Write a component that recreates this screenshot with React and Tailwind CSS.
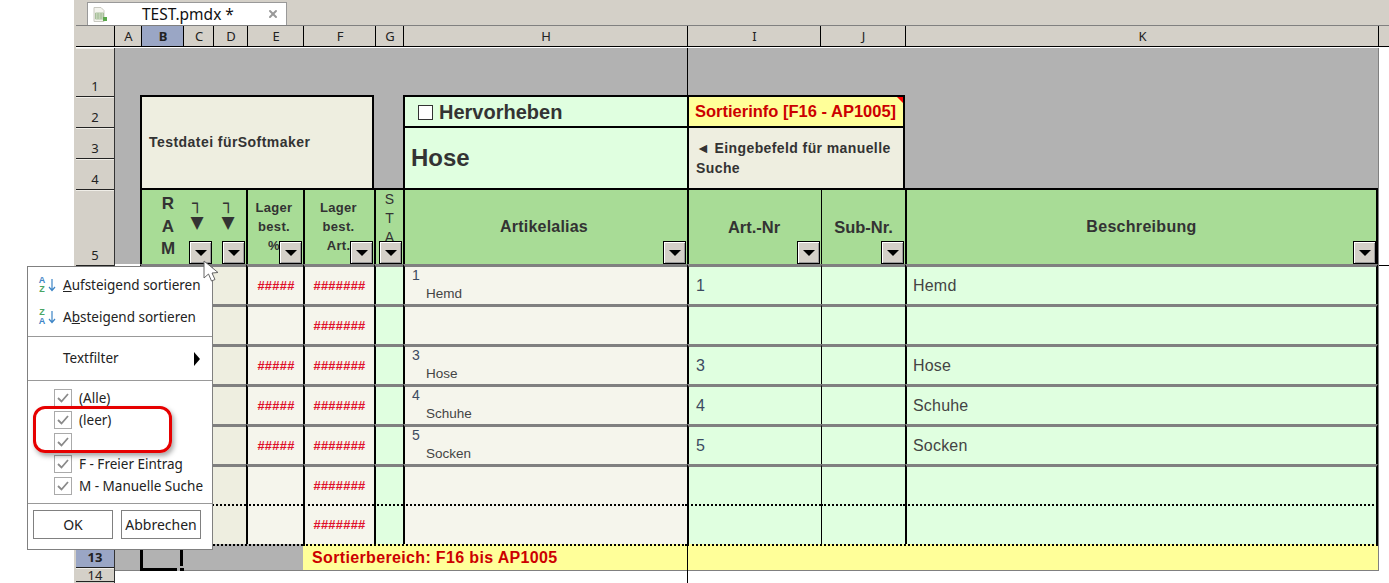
import React from "react";
import { X } from "lucide-react";

const COLS =
  "grid grid-cols-[25px_44px_30px_32px_57px_71px_29px_284px_134px_84px_473px_11px]";

const columns = [
  { label: "A", w: "w-[27px]" },
  { label: "B", w: "w-[42px]", active: true },
  { label: "C", w: "w-[30px]" },
  { label: "D", w: "w-[34px]" },
  { label: "E", w: "w-[56px]" },
  { label: "F", w: "w-[72px]" },
  { label: "G", w: "w-[28px]" },
  { label: "H", w: "w-[284px]" },
  { label: "I", w: "w-[133px]" },
  { label: "J", w: "w-[85px]" },
  { label: "K", w: "w-[473px]" },
];

const rows = [
  { id: 1, e: "#####", f: "#######", num: "1", name: "Hemd" },
  { id: 2, f: "#######" },
  { id: 3, e: "#####", f: "#######", num: "3", name: "Hose" },
  { id: 4, e: "#####", f: "#######", num: "4", name: "Schuhe" },
  { id: 5, e: "#####", f: "#######", num: "5", name: "Socken" },
  { id: 6, f: "#######" },
  { id: 7, f: "#######", dotted: true },
];

const FilterButton = ({ className }) => (
  <div
    className={`absolute bottom-0 w-[23px] h-[23px] border border-black bg-[#d4d0c8] shadow-[inset_1px_1px_0_#fff,inset_-1px_-1px_0_#999] flex items-center justify-center ${className}`}
  >
    <div className="w-0 h-0 border-x-[6px] border-t-[6px] border-x-transparent border-t-black" />
  </div>
);

const RowNumber = ({ h, label, active, className = "items-end pb-[2px]" }) => (
  <div
    className={`${h} ${className} flex justify-center overflow-hidden border-t border-b border-t-[#f0eee8] border-b-[#222] text-[13px] leading-4 text-[#222] font-['Noto_Sans',sans-serif] ${
      active ? "bg-[#9aa6c5] font-bold" : "bg-[#d4d0c8]"
    }`}
  >
    {label}
  </div>
);

const SortIcon = ({ top, bottom, topColor, bottomColor }) => (
  <div className="w-[25px] flex items-center">
    <div className="flex flex-col items-center text-[9px] leading-[9px] font-bold font-['Liberation_Sans',sans-serif] w-[10px]">
      <span className={topColor}>{top}</span>
      <span className={bottomColor}>{bottom}</span>
    </div>
    <svg width="8" height="14" viewBox="0 0 8 14" className="ml-[1px]">
      <path d="M4 1v11M1 9l3 3.5L7 9" fill="none" stroke="#3d85c6" strokeWidth="1.2" />
    </svg>
  </div>
);

const CheckItem = ({ label }) => (
  <div className="h-[22px] flex items-center pl-[26px] gap-[7px]">
    <div className="w-[18px] h-[18px] border border-[#aaa] flex items-center justify-center bg-white shrink-0">
      <svg width="14" height="12" viewBox="0 0 14 12">
        <path d="M2 6l3.5 3.5L12 2" fill="none" stroke="#8a8a8a" strokeWidth="1.8" />
      </svg>
    </div>
    <span className="text-[13.5px] leading-4 text-[#222]">{label}</span>
  </div>
);

const DataRow = ({ row }) => {
  const line = row.dotted
    ? "border-t-2 border-t-black [border-top-style:dotted]"
    : "border-t-3 border-t-[#808080]";
  return (
    <div className={`${COLS} h-[40px]`}>
      <div />
      <div className={`col-span-3 bg-[#eeeee0] border-l-2 border-l-black ${line}`} />
      <div
        className={`bg-[#f5f5ec] border-l-2 border-l-black ${line} flex items-center justify-center pl-[1px] font-bold text-[13px] tracking-[0.2px] text-[#e0102a]`}
      >
        {row.e}
      </div>
      <div
        className={`bg-[#f5f5ec] border-l-2 border-l-black ${line} flex items-center justify-center font-bold text-[13px] tracking-[0.2px] text-[#e0102a]`}
      >
        {row.f}
      </div>
      <div className={`bg-[#e0ffe0] border-l-2 border-l-black ${line}`} />
      <div className={`bg-[#f5f5ec] border-l-2 border-l-black ${line} pl-[7px] text-[#444]`}>
        {row.num && (
          <>
            <div className="text-[14px] leading-4 text-[#3c4a60]">{row.num}</div>
            <div className="text-[13.5px] leading-4 mt-[3px] ml-[14px]">{row.name}</div>
          </>
        )}
      </div>
      <div
        className={`bg-[#e0ffe0] border-l-2 border-l-black ${line} flex items-center pl-[7px] pt-[1px] text-[16px] text-[#3c4a60]`}
      >
        {row.num}
      </div>
      <div className={`bg-[#e0ffe0] border-l border-l-black ${line}`} />
      <div
        className={`bg-[#e0ffe0] border-l-2 border-r-2 border-x-black ${line} flex items-center pl-[6px] pt-[1px] text-[16px] tracking-[0.2px] text-[#444]`}
      >
        {row.name}
      </div>
      <div className="bg-white border-l border-l-[#808080]">
        {row.id === 1 && <div className="mt-px border-t border-t-black" />}
      </div>
    </div>
  );
};

const App = () => {
  return (
    <div className="relative w-[1389px] h-[583px] overflow-hidden bg-white flex font-['Liberation_Sans',Arial,sans-serif] text-[#333]">
      <div className="w-[74px] shrink-0" />
      <div className="w-[1315px] border-l-2 border-l-[#d4d0c8] flex flex-col">
        {/* Tab bar */}
        <div className="h-[26px] bg-[#d4d0c8] border-b border-b-[#808080] pl-[11px] pt-[2px]">
          <div className="relative w-[200px] h-[23px] bg-white border-t border-x border-[#999] flex items-center pl-[54px] pt-[1px] text-[15.5px] text-[#111] font-['Noto_Sans',sans-serif]">
            <svg width="14" height="15" viewBox="0 0 14 15" className="absolute left-[5px] top-[4px]">
              <path d="M1 .5h7l3 3v11H1z" fill="#f4f4ee" stroke="#c8c8c0" />
              <path d="M2.5 6h8v6h-8zM2.5 8h8M2.5 10h8M5 6v6M8 6v6" fill="#dfead8" stroke="#9ab58c" strokeWidth=".8" />
              <path d="M10 10h4v4h-4z" fill="#5aa84a" />
            </svg>
            TEST.pmdx *
            <X className="absolute left-[179px] top-[5px] w-3 h-3 text-[#999]" strokeWidth={4} />
          </div>
        </div>

        {/* Column letters */}
        <div className="h-[21px] bg-[#d4d0c8] border-b border-b-black flex text-[13px] text-[#222] font-['Noto_Sans',sans-serif] mb-px">
          <div className="w-[39px] border-r border-r-black" />
          {columns.map((c) => (
            <div
              key={c.label}
              className={`${c.w} flex items-center justify-center pl-[1px] pt-[1px] border-r border-r-black ${
                c.active ? "bg-[#9aa6c5] font-bold" : ""
              }`}
            >
              {c.label}
            </div>
          ))}
        </div>

        <div className="flex">
          {/* Row numbers */}
          <div className="w-[39px] h-[535px] shrink-0 flex flex-col bg-[#d4d0c8] border-r border-r-[#333]">
            <RowNumber h="h-[49px]" label="1" />
            <RowNumber h="h-[31px]" label="2" />
            <RowNumber h="h-[31px]" label="3" />
            <RowNumber h="h-[31px]" label="4" />
            <RowNumber h="h-[76px]" label="5" />
            <div className="h-[280px]" />
            <RowNumber h="h-[22px]" label="13" active />
            <RowNumber
              h="h-[14px]"
              label={<span className="block leading-[12px]">14</span>}
              className="items-start"
            />
          </div>

          <div className="w-[1274px] flex flex-col">
            {/* Header block */}
            <div className={`${COLS} grid-rows-[47px_31px_62px_76px] bg-[#b2b2b2]`}>
              <div className="col-start-9 col-end-12 row-start-1 border-l border-l-black" />
              <div className="col-start-12 row-start-1 row-end-5 bg-white border-l border-l-[#808080]" />

              <div className="col-start-2 col-end-7 row-start-2 row-end-4 bg-[#eeeee0] border-t-2 border-x-2 border-black flex items-center pl-[7px] font-bold text-[14px] tracking-[0.45px]">
                Testdatei fürSoftmaker
              </div>

              <div className="col-start-8 row-start-2 bg-[#e0ffe0] border-t-2 border-l-2 border-black flex items-center pl-[13px] pt-[1px] gap-[6px] font-bold text-[20px]">
                <div className="w-[15px] h-[15px] bg-white border border-[#333]" />
                Hervorheben
              </div>
              <div className="relative col-start-9 col-end-11 row-start-2 bg-[#ffff99] border-t-2 border-x-2 border-black flex items-center pl-[6px] font-bold text-[16.5px] text-[#cc0000] whitespace-nowrap">
                Sortierinfo [F16 - AP1005]
                <div className="absolute top-0 right-0 w-0 h-0 border-l-[6px] border-t-[6px] border-l-transparent border-t-[#ff0000]" />
              </div>
              <div className="col-start-8 row-start-3 bg-[#e0ffe0] border-t-2 border-l-2 border-black flex items-center pl-[6px] font-bold text-[24px]">
                Hose
              </div>
              <div className="col-start-9 col-end-11 row-start-3 bg-[#eeeee0] border-t-2 border-x-2 border-black pl-[7px] pt-[10px] font-bold text-[14px] leading-[20px] tracking-[0.4px]">
                ◄ Eingebefeld für manuelle
                <br />
                Suche
              </div>

              {/* Titles */}
              <div className="relative col-start-2 col-end-5 row-start-4 bg-[#a8dc96] border-t-2 border-l-2 border-black flex">
                <div className="w-[40px] ml-[6px] pt-[3px] text-center font-bold text-[17px] leading-[22.5px]">
                  R<br />A<br />M
                </div>
                <div className="w-[18px] pt-[3px] flex flex-col items-center font-bold font-['DejaVu_Sans',sans-serif]">
                  <span className="text-[17px] leading-[20px]">┐</span>
                  <span className="text-[17px] leading-[19px]">▼</span>
                </div>
                <div className="w-[18px] ml-[13px] pt-[3px] flex flex-col items-center font-bold font-['DejaVu_Sans',sans-serif]">
                  <span className="text-[17px] leading-[20px]">┐</span>
                  <span className="text-[17px] leading-[19px]">▼</span>
                </div>
                <FilterButton className="left-[47px]" />
                <FilterButton className="right-[1px]" />
              </div>
              <div className="relative col-start-5 row-start-4 bg-[#a8dc96] border-t-2 border-l-2 border-black pt-[8px] pr-[3px] text-center font-bold text-[13px] leading-[19px] tracking-[0.3px]">
                Lager<br />best.<br />%
                <FilterButton className="right-[1px]" />
              </div>
              <div className="relative col-start-6 row-start-4 bg-[#a8dc96] border-t-2 border-l-2 border-black pt-[8px] pr-[2px] text-center font-bold text-[13px] leading-[19px] tracking-[0.3px]">
                Lager<br />best.<br />Art.
                <FilterButton className="right-[1px]" />
              </div>
              <div className="relative col-start-7 row-start-4 bg-[#a8dc96] border-t-2 border-l-2 border-black text-center text-[14px] leading-[19px]">
                S<br />T<br />A
                <FilterButton className="right-[1px]" />
              </div>
              <div className="relative col-start-8 row-start-4 bg-[#a8dc96] border-t-2 border-l-2 border-black flex items-center justify-center pr-[4px] font-bold text-[16px] tracking-[0.2px]">
                Artikelalias
                <FilterButton className="right-[1px]" />
              </div>
              <div className="relative col-start-9 row-start-4 bg-[#a8dc96] border-t-2 border-l-2 border-black flex items-center justify-center pr-[2px] font-bold text-[16.5px]">
                Art.-Nr
                <FilterButton className="right-[1px]" />
              </div>
              <div className="relative col-start-10 row-start-4 bg-[#a8dc96] border-t-2 border-l border-black flex items-center justify-center font-bold text-[16.5px]">
                Sub-Nr.
                <FilterButton className="right-[1px]" />
              </div>
              <div className="relative col-start-11 row-start-4 bg-[#a8dc96] border-t-2 border-x-2 border-black flex items-center justify-center font-bold text-[16px] tracking-[0.3px]">
                Beschreibung
                <FilterButton className="right-0" />
              </div>
            </div>

            {rows.map((row) => (
              <DataRow key={row.id} row={row} />
            ))}

            {/* Sort range row */}
            <div className={`${COLS} h-[25px]`}>
              <div className="bg-[#b2b2b2] border-b border-b-[#808080]" />
              <div className="relative bg-[#b2b2b2] border-l-3 border-b-3 border-l-black border-b-black">
                <div className="absolute right-[1px] top-0 bottom-[2px] w-[3px] bg-black" />
                <div className="absolute -bottom-[3px] right-[4px] w-[3px] h-[3px] bg-[#b2b2b2]" />
              </div>
              <div className="col-span-3 bg-[#b2b2b2] border-t-2 [border-top-style:dotted] border-t-black border-b border-b-[#808080]" />
              <div className="col-span-3 bg-[#ffff99] border-t-2 [border-top-style:dotted] border-t-black border-b border-b-[#808080] flex items-center pl-[9px] font-bold text-[16px] tracking-[0.35px] text-[#cc0000] whitespace-nowrap">
                Sortierbereich: F16 bis AP1005
              </div>
              <div className="col-span-3 bg-[#ffff99] border-l border-l-black border-t-2 [border-top-style:dotted] border-t-black border-b border-b-[#808080]" />
              <div className="bg-white border-l border-l-[#808080]" />
            </div>
            <div className={`${COLS} h-[15px]`}>
              <div className="col-start-9 col-end-12 border-l border-l-black" />
            </div>
          </div>
        </div>
      </div>

      {/* Filter dropdown */}
      <div className="absolute left-[27px] top-[266px] w-[186px] h-[284px] bg-white border border-[#808080] flex flex-col font-['Noto_Sans',sans-serif] text-[13.5px] text-[#222]">
        <div className="h-[70px] border-b border-b-[#999] pl-[9px] pt-[2px]">
          <div className="h-[32px] flex items-center">
            <SortIcon top="A" bottom="Z" topColor="text-[#3d85c6]" bottomColor="text-[#4aa564]" />
            <span className="ml-[1px]"><u>A</u>ufsteigend sortieren</span>
          </div>
          <div className="h-[32px] flex items-center">
            <SortIcon top="Z" bottom="A" topColor="text-[#4aa564]" bottomColor="text-[#3d85c6]" />
            <span className="ml-[1px]">A<u>b</u>steigend sortieren</span>
          </div>
        </div>
        <div className="h-[44px] border-b border-b-[#999] flex items-center justify-between pl-[35px] pr-[12px]">
          Textfilter
          <div className="w-0 h-0 border-y-[7px] border-l-[6px] border-y-transparent border-l-black" />
        </div>
        <div className="h-[123px] border-b border-b-[#999] pt-[6px]">
          <CheckItem label="(Alle)" />
          <CheckItem label="(leer)" />
          <CheckItem label="" />
          <CheckItem label="F - Freier Eintrag" />
          <CheckItem label="M - Manuelle Suche" />
        </div>
        <div className="flex gap-[8px] pl-[5px] pt-[6px]">
          <button className="w-[80px] h-[29px] border border-[#808080] bg-white text-[14px]">OK</button>
          <button className="w-[80px] h-[29px] border border-[#808080] bg-white text-[14px]">Abbrechen</button>
        </div>
      </div>

      {/* Red annotation */}
      <div className="absolute left-[33px] top-[406px] w-[139px] h-[47px] rounded-[12px] border-3 border-[#e60000] shadow-[2px_3px_5px_rgba(0,0,0,0.35)]" />

      {/* Mouse cursor */}
      <svg width="17" height="24" viewBox="0 0 17 24" className="absolute left-[203px] top-[260px]">
        <path d="M1 1v17l4.5-4 3 7 3.5-1.5-3-6.5 6-.5z" fill="#fff" stroke="#666" />
      </svg>
    </div>
  );
};

export default App;
